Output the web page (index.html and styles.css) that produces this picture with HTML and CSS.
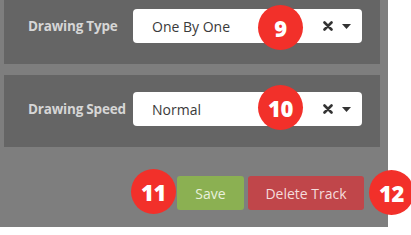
FILE: index.html
```html
<!DOCTYPE html>
<html>
<head>
<meta charset="utf-8">
<link rel="stylesheet" href="styles.css">
</head>
<body>
<div class="wrap">
  <div class="panel first">
    <div class="label">Drawing Type</div>
    <div class="select">
      <span class="value">One By One</span>
      <span class="icons">
        <svg class="clear" width="10" height="10" viewBox="0 0 10 10"><path d="M1.5 1.5 L8.5 8.5 M8.5 1.5 L1.5 8.5" stroke="#333" stroke-width="2.6" stroke-linecap="round"/></svg>
        <svg class="caret" width="9" height="5" viewBox="0 0 9 5"><path d="M0 0 H9 L4.5 5 Z" fill="#333"/></svg>
      </span>
      <span class="badge b9">9</span>
    </div>
  </div>
  <div class="panel">
    <div class="label">Drawing Speed</div>
    <div class="select">
      <span class="value">Normal</span>
      <span class="icons">
        <svg class="clear" width="10" height="10" viewBox="0 0 10 10"><path d="M1.5 1.5 L8.5 8.5 M8.5 1.5 L1.5 8.5" stroke="#333" stroke-width="2.6" stroke-linecap="round"/></svg>
        <svg class="caret" width="9" height="5" viewBox="0 0 9 5"><path d="M0 0 H9 L4.5 5 Z" fill="#333"/></svg>
      </span>
      <span class="badge b10">10</span>
    </div>
  </div>
  <div class="actions">
    <span class="badge b11">11</span>
    <button class="btn save">Save</button>
    <button class="btn delete">Delete Track</button>
    <span class="badge b12">12</span>
  </div>
</div>
</body>
</html>
```
FILE: styles.css
```css
html, body {
  margin: 0;
  padding: 0;
  background: #ffffff;
  overflow: hidden;
}
.wrap {
  width: 388px;
  height: 235px;
  background: #7e7e7e;
  box-sizing: border-box;
  padding-left: 4px;
  padding-right: 8px;
  font-family: "Open Sans", "Liberation Sans", sans-serif;
}
.panel {
  height: 72px;
  box-sizing: border-box;
  background: #656565;
  display: flex;
  align-items: center;
  padding: 17px 18px 21px 24px;
}
.panel.first {
  margin-top: -8px;
  margin-bottom: 11px;
}
.label {
  width: 105px;
  flex: none;
  color: #d6d6d6;
  font-weight: 700;
  font-size: 13.5px;
  letter-spacing: -0.2px;
}
.select {
  position: relative;
  flex: 1;
  height: 34px;
  background: #ffffff;
  border-radius: 4px;
  display: flex;
  align-items: center;
  padding: 0 11px 0 19px;
  font-size: 14px;
  color: #3a3a3a;
}
.value {
  flex: 1;
}
.icons {
  display: flex;
  align-items: center;
  gap: 9px;
}
.badge {
  position: absolute;
  width: 45px;
  height: 45px;
  border-radius: 50%;
  background: #f2302a;
  color: #ffffff;
  font-weight: 800;
  font-size: 22px;
  display: flex;
  align-items: center;
  justify-content: center;
  letter-spacing: -0.5px;
}
.b9 {
  left: 125px;
  top: -4px;
}
.b10 {
  left: 125px;
  top: -7px;
}
.actions {
  position: relative;
  margin-top: 29px;
  display: flex;
  justify-content: flex-end;
  gap: 4px;
  padding-right: 16px;
}
.btn {
  height: 34px;
  border: none;
  border-radius: 3px;
  font-family: "Open Sans", "Liberation Sans", sans-serif;
  font-size: 14px;
  padding: 0;
}
.save {
  width: 67px;
  background: #8bb052;
  color: #e9f0dd;
}
.delete {
  width: 116px;
  background: #c0464a;
  color: #f5dcdc;
}
.b11 {
  left: 127px;
  top: -7px;
}
.b12 {
  left: 365px;
  top: -6px;
}
```
